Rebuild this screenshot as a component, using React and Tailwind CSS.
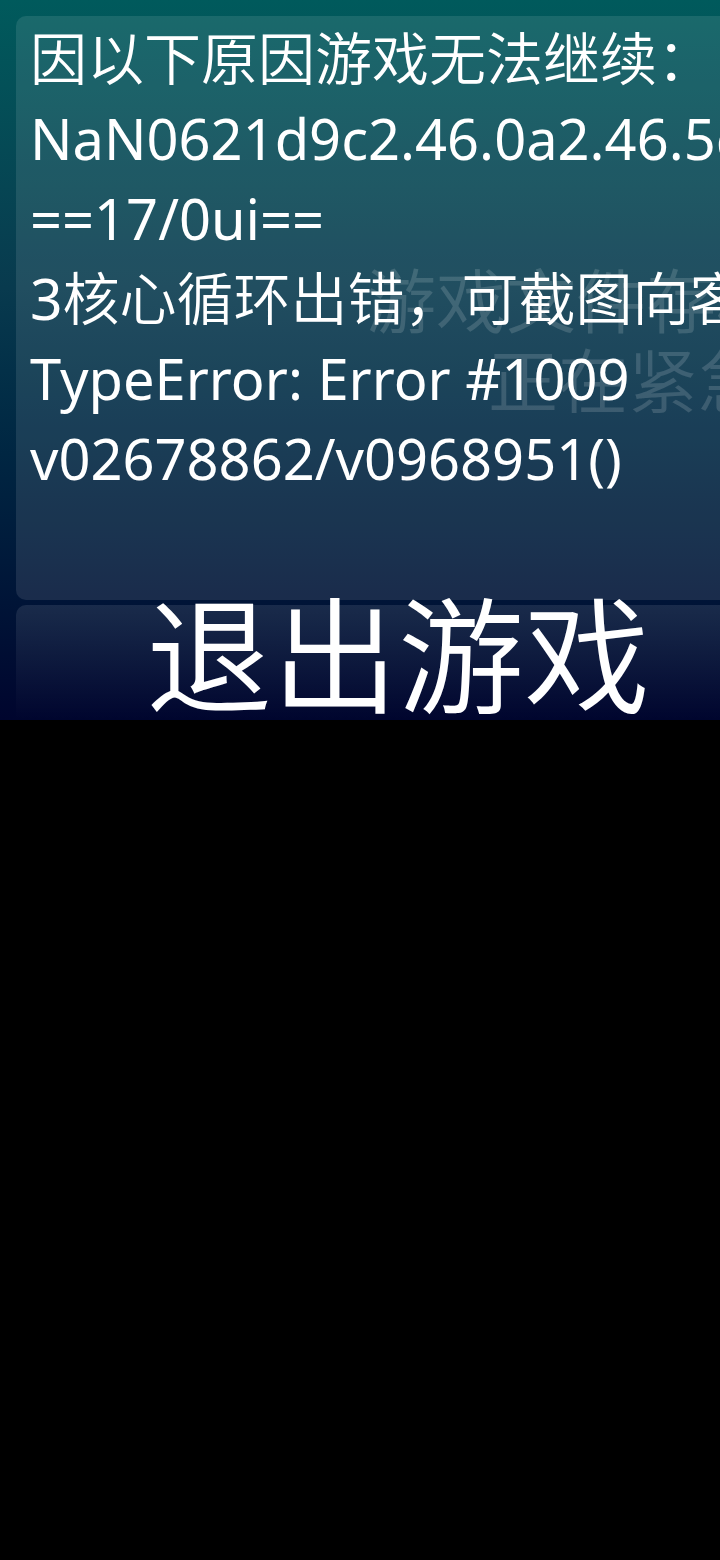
import React from 'react';

const errorLines = [
    { text: '因以下原因游戏无法继续：', cjk: true },
    { text: 'NaN0621d9c2.46.0a2.46.5d', cjk: false },
    { text: '==17/0ui==', cjk: false },
    { text: '3核心循环出错，可截图向客服反馈', cjk: true },
    { text: 'TypeError: Error #1009', cjk: false },
    { text: 'v02678862/v0968951()', cjk: false },
];

const App = () => {
    return (
        <div className="w-[720px] h-[1560px] bg-black" style={{ fontFamily: '"Noto Sans", "Noto Sans CJK SC DemiLight", "Noto Sans CJK SC", sans-serif' }}>
            <div className="relative w-[720px] h-[720px] overflow-hidden bg-gradient-to-b from-[#005a5c] via-[#083a4e] via-40% to-[#00052e]">
                {/* faint text behind */}
                <div className="absolute left-[366px] top-[261px] text-[70px] leading-[80px] text-white/15 whitespace-nowrap">
                    <div>游戏文件存档被损坏</div>
                    <div className="pl-[122px]">正在紧急修复中</div>
                </div>

                <div className="relative flex flex-col w-[764px] pl-4 pt-4">
                    <div className="h-[584px] rounded-[10px] bg-white/10 pl-[14px] pt-[2px] text-white leading-[80px] whitespace-nowrap overflow-hidden">
                        {errorLines.map((line, i) => (
                            <div key={i} className={line.cjk ? 'text-[57px]' : 'text-[56px]'}>{line.text}</div>
                        ))}
                    </div>
                    <div className="mt-[5px] h-[115px] rounded-t-[10px] bg-gradient-to-b from-white/10 to-white/0 flex justify-center pl-4">
                        <div className="-mt-[13px] text-white text-[126px] leading-none whitespace-nowrap">退出游戏</div>
                    </div>
                </div>
            </div>
        </div>
    );
};

export default App;
